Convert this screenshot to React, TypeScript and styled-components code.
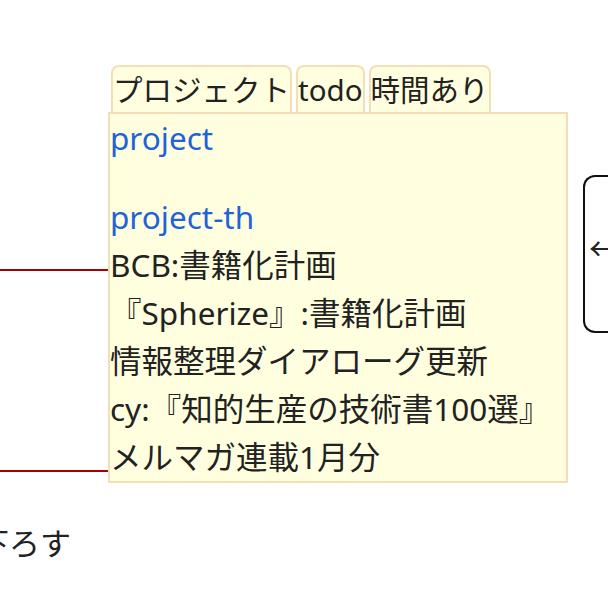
import React from "react";
import styled, { createGlobalStyle } from "styled-components";

const GlobalStyle = createGlobalStyle`
  html, body {
    margin: 0;
    padding: 0;
    background: #ffffff;
    overflow: hidden;
  }
  body {
    font-family: "Noto Sans", "Noto Sans CJK JP", sans-serif;
    color: #222222;
  }
`;

const Canvas = styled.div`
  width: 608px;
  height: 616px;
  padding-top: 65px;
  box-sizing: border-box;
  overflow: hidden;
`;

const Row = styled.div`
  display: flex;
  align-items: flex-start;
`;

const Wires = styled.div`
  width: 108px;
  flex-shrink: 0;
  display: flex;
  flex-direction: column;
  padding-top: 204px;
  gap: 199px;
`;

const Wire = styled.div`
  height: 2px;
  background: #a80000;
`;

const Card = styled.div`
  width: 460px;
  flex-shrink: 0;
  display: flex;
  flex-direction: column;
`;

const TabBar = styled.div`
  display: flex;
  gap: 4px;
  padding-left: 3px;
`;

const Tab = styled.div`
  background: #ffffe0;
  border: 2px solid #f5deb3;
  border-bottom: none;
  border-radius: 8px 8px 0 0;
  font-size: 29.5px;
  line-height: 45px;
  height: 45px;
  padding: 0;
  white-space: nowrap;
`;

const Panel = styled.div`
  background: #ffffe0;
  border: 2px solid #f5deb3;
  font-size: 31.5px;
  display: flex;
  flex-direction: column;
`;

const Line = styled.div<{ $link?: boolean }>`
  height: 48px;
  line-height: 48px;
  white-space: nowrap;
  color: ${(p) => (p.$link ? "#1f63d8" : "#222222")};
`;

const Spacer = styled.div`
  height: 31px;
`;

const Node = styled.div`
  flex-shrink: 0;
  width: 60px;
  height: 158px;
  margin-left: 15px;
  margin-top: 110px;
  border: 2px solid #111111;
  border-right: none;
  border-radius: 12px 0 0 12px;
  padding-left: 4px;
  padding-top: 50px;
  box-sizing: border-box;
`;

const Arrow = styled.span`
  font-family: "Noto Sans CJK JP", sans-serif;
  font-size: 31px;
  line-height: 40px;
  color: #222222;
`;

const Caption = styled.div`
  margin-left: -22px;
  margin-top: 36px;
  font-size: 31px;
  line-height: 48px;
  white-space: nowrap;
`;

export default function App() {
  return (
    <>
      <GlobalStyle />
      <Canvas>
        <Row>
          <Wires>
            <Wire />
            <Wire />
          </Wires>
          <Card>
            <TabBar>
              <Tab>プロジェクト</Tab>
              <Tab>todo</Tab>
              <Tab>時間あり</Tab>
            </TabBar>
            <Panel>
              <Line $link>project</Line>
              <Spacer />
              <Line $link>project-th</Line>
              <Line>BCB:書籍化計画</Line>
              <Line>『Spherize』:書籍化計画</Line>
              <Line>情報整理ダイアローグ更新</Line>
              <Line>cy:『知的生産の技術書100選』</Line>
              <Line>メルマガ連載1月分</Line>
            </Panel>
          </Card>
          <Node>
            <Arrow>←</Arrow>
          </Node>
        </Row>
        <Caption>下ろす</Caption>
      </Canvas>
    </>
  );
}
